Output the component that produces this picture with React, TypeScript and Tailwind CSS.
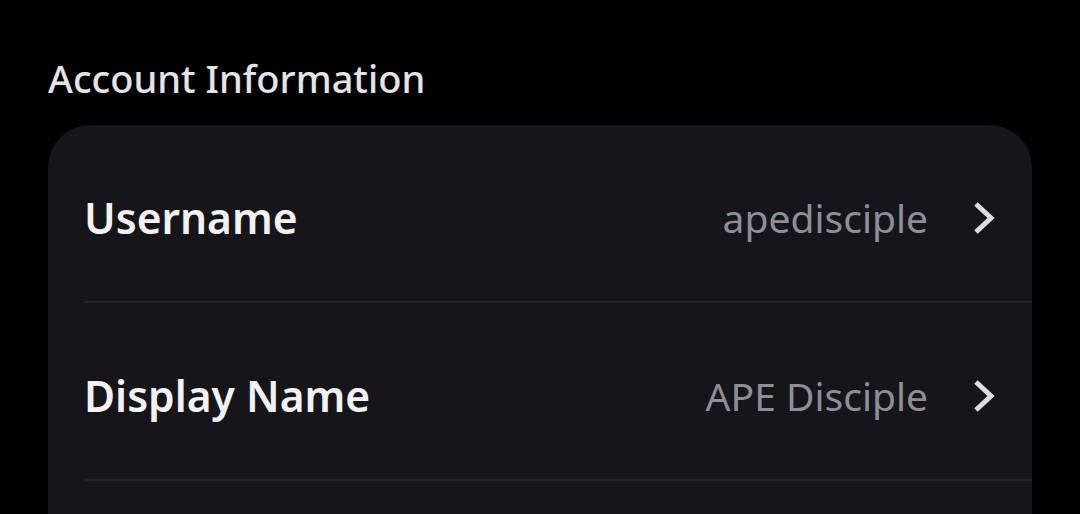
const rows = [
  { label: "Username", value: "apedisciple" },
  { label: "Display Name", value: "APE Disciple" },
];

function Chevron() {
  return (
    <svg width="24" height="36" viewBox="0 0 24 36" fill="none" className="text-[#dcdce1]">
      <polyline points="4,4 19,18 4,32" stroke="currentColor" strokeWidth="5" strokeLinejoin="miter" />
    </svg>
  );
}

export default function App() {
  return (
    <div
      className="h-[514px] w-[1080px] overflow-hidden bg-black pl-12 pr-12 pt-[54px]"
      style={{ fontFamily: '"Noto Sans", "Open Sans", sans-serif' }}
    >
      <h2 className="text-[38px] font-medium leading-[48px] text-[#e4e4e7]">Account Information</h2>

      <div className="mt-[23px] rounded-[42px] bg-[#16161a] pl-9">
        {rows.map((row) => (
          <div key={row.label} className="border-b-2 border-[#232328]">
            <div className="flex h-[176px] items-center justify-between pt-[10px] pr-9">
              <span className="text-[42.5px] font-semibold text-[#f2f2f4]">{row.label}</span>
              <div className="flex items-center gap-[44px]">
                <span className="text-[39px] text-[#8e8e98]">{row.value}</span>
                <Chevron />
              </div>
            </div>
          </div>
        ))}
        <div className="h-[80px]" />
      </div>
    </div>
  );
}
